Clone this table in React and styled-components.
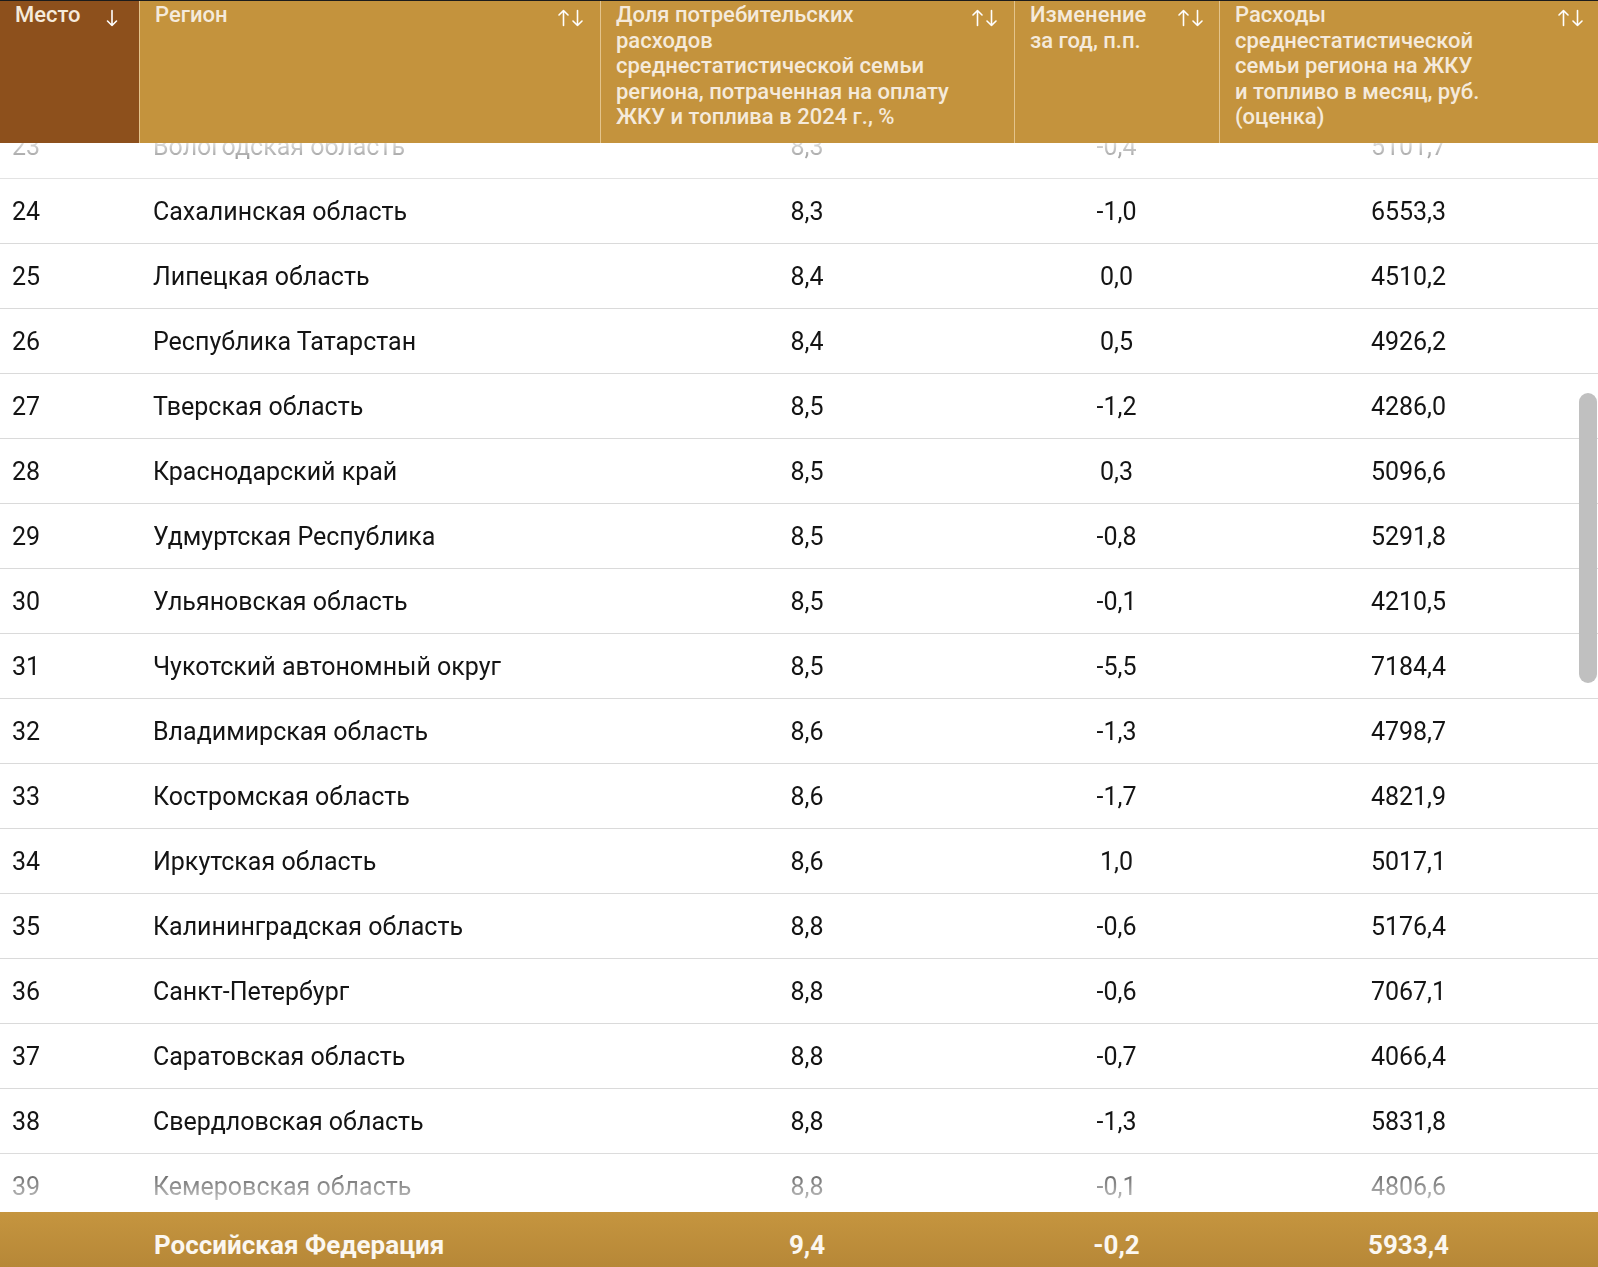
import React, { useLayoutEffect, useRef } from 'react';
import styled, { createGlobalStyle } from 'styled-components';

const GlobalStyle = createGlobalStyle`
  html, body {
    margin: 0;
    padding: 0;
    overflow: hidden;
    background: #fff;
  }
  body {
    font-family: Roboto, 'Liberation Sans', sans-serif;
    -webkit-font-smoothing: antialiased;
  }
`;

const COLS = '139px 461px 414px 205px 1fr';

const Page = styled.div`
  display: flex;
  flex-direction: column;
  width: 1598px;
  height: 1277px;
`;

const HeadRow = styled.div`
  display: grid;
  grid-template-columns: ${COLS};
  height: 142px;
  border-top: 1px solid #1c1c1c;
  flex-shrink: 0;
`;

const HeadCell = styled.div`
  display: flex;
  justify-content: space-between;
  align-items: flex-start;
  gap: 10px;
  padding: 1px ${({ $padRight }) => $padRight || 15}px 0 15px;
  background: ${({ $active }) => ($active ? '#8d501c' : '#c4933d')};
  border-left: ${({ $first }) => ($first ? 'none' : '1px solid rgba(255, 236, 205, 0.55)')};
  color: #f5eadb;
  font-size: 22px;
  font-weight: 500;
  line-height: 25.6px;
`;

const HeadLabel = styled.span`
  white-space: nowrap;
`;

const SortIcon = styled.svg`
  flex-shrink: 0;
  margin-top: 7px;
`;

const BodyWrap = styled.div`
  position: relative;
  flex: 1;
  min-height: 0;
`;

const Scroller = styled.div`
  height: 100%;
  overflow: hidden;
  -webkit-mask-image: linear-gradient(
    to bottom,
    rgba(0, 0, 0, 0.15) 0,
    #000 50px,
    #000 calc(100% - 62px),
    rgba(0, 0, 0, 0.08) 100%
  );
  mask-image: linear-gradient(
    to bottom,
    rgba(0, 0, 0, 0.15) 0,
    #000 50px,
    #000 calc(100% - 62px),
    rgba(0, 0, 0, 0.08) 100%
  );
`;

const Row = styled.div`
  display: grid;
  grid-template-columns: ${COLS};
  height: 64px;
  border-bottom: 1px solid #dadada;
  align-items: center;
  color: #141414;
  font-size: 25px;
`;

const Cell = styled.div`
  padding-left: ${({ $pad }) => $pad || 0}px;
  text-align: ${({ $center }) => ($center ? 'center' : 'left')};
  white-space: nowrap;
`;

const Thumb = styled.div`
  position: absolute;
  top: 250px;
  right: 1px;
  width: 18px;
  height: 290px;
  border-radius: 9px;
  background: #c0c0c0;
`;

const FootRow = styled.div`
  display: grid;
  grid-template-columns: ${COLS};
  height: 65px;
  flex-shrink: 0;
  align-items: center;
  background: linear-gradient(to bottom, #c5953f, #b48536);
  color: #fbf7f0;
  font-size: 26px;
  font-weight: 700;
`;

const rows = [
  [23, 'Вологодская область', '8,3', '-0,4', '5101,7'],
  [24, 'Сахалинская область', '8,3', '-1,0', '6553,3'],
  [25, 'Липецкая область', '8,4', '0,0', '4510,2'],
  [26, 'Республика Татарстан', '8,4', '0,5', '4926,2'],
  [27, 'Тверская область', '8,5', '-1,2', '4286,0'],
  [28, 'Краснодарский край', '8,5', '0,3', '5096,6'],
  [29, 'Удмуртская Республика', '8,5', '-0,8', '5291,8'],
  [30, 'Ульяновская область', '8,5', '-0,1', '4210,5'],
  [31, 'Чукотский автономный округ', '8,5', '-5,5', '7184,4'],
  [32, 'Владимирская область', '8,6', '-1,3', '4798,7'],
  [33, 'Костромская область', '8,6', '-1,7', '4821,9'],
  [34, 'Иркутская область', '8,6', '1,0', '5017,1'],
  [35, 'Калининградская область', '8,8', '-0,6', '5176,4'],
  [36, 'Санкт-Петербург', '8,8', '-0,6', '7067,1'],
  [37, 'Саратовская область', '8,8', '-0,7', '4066,4'],
  [38, 'Свердловская область', '8,8', '-1,3', '5831,8'],
  [39, 'Кемеровская область', '8,8', '-0,1', '4806,6'],
];

const ArrowDown = () => (
  <SortIcon width="12" height="18" viewBox="0 0 12 18" fill="none" stroke="#fff" strokeWidth="1.6" strokeLinecap="round" strokeLinejoin="round">
    <path d="M6 1.5V16.5M1.5 12L6 16.5L10.5 12" />
  </SortIcon>
);

const ArrowsUpDown = () => (
  <SortIcon width="25" height="18" viewBox="0 0 25 18" fill="none" stroke="#fff" strokeWidth="1.6" strokeLinecap="round" strokeLinejoin="round">
    <path d="M5.5 16.5V1.5M1 6L5.5 1.5L10 6" />
    <path d="M19.5 1.5V16.5M15 12L19.5 16.5L24 12" />
  </SortIcon>
);

const Lines = ({ lines }) =>
  lines.map((l, i) => (
    <React.Fragment key={i}>
      {l}
      {i < lines.length - 1 && <br />}
    </React.Fragment>
  ));

export default function App() {
  const scrollRef = useRef(null);

  useLayoutEffect(() => {
    if (scrollRef.current) scrollRef.current.scrollTop = 29;
  }, []);

  return (
    <>
      <GlobalStyle />
      <Page>
        <HeadRow>
          <HeadCell $active $first $padRight={21}>
            <HeadLabel>Место</HeadLabel>
            <ArrowDown />
          </HeadCell>
          <HeadCell $padRight={17}>
            <HeadLabel>Регион</HeadLabel>
            <ArrowsUpDown />
          </HeadCell>
          <HeadCell $padRight={17}>
            <HeadLabel>
              <Lines
                lines={[
                  'Доля потребительских',
                  'расходов',
                  'среднестатистической семьи',
                  'региона, потраченная на оплату',
                  'ЖКУ и топлива в 2024 г., %',
                ]}
              />
            </HeadLabel>
            <ArrowsUpDown />
          </HeadCell>
          <HeadCell $padRight={16}>
            <HeadLabel>
              <Lines lines={['Изменение', 'за год, п.п.']} />
            </HeadLabel>
            <ArrowsUpDown />
          </HeadCell>
          <HeadCell $padRight={15}>
            <HeadLabel>
              <Lines
                lines={[
                  'Расходы',
                  'среднестатистической',
                  'семьи региона на ЖКУ',
                  'и топливо в месяц, руб.',
                  '(оценка)',
                ]}
              />
            </HeadLabel>
            <ArrowsUpDown />
          </HeadCell>
        </HeadRow>

        <BodyWrap>
          <Scroller ref={scrollRef}>
            {rows.map(([place, region, share, change, spend]) => (
              <Row key={place}>
                <Cell $pad={12}>{place}</Cell>
                <Cell $pad={14}>{region}</Cell>
                <Cell $center>{share}</Cell>
                <Cell $center>{change}</Cell>
                <Cell $center>{spend}</Cell>
              </Row>
            ))}
          </Scroller>
          <Thumb />
        </BodyWrap>

        <FootRow>
          <Cell />
          <Cell $pad={15}>Российская Федерация</Cell>
          <Cell $center>9,4</Cell>
          <Cell $center>-0,2</Cell>
          <Cell $center>5933,4</Cell>
        </FootRow>
      </Page>
    </>
  );
}
